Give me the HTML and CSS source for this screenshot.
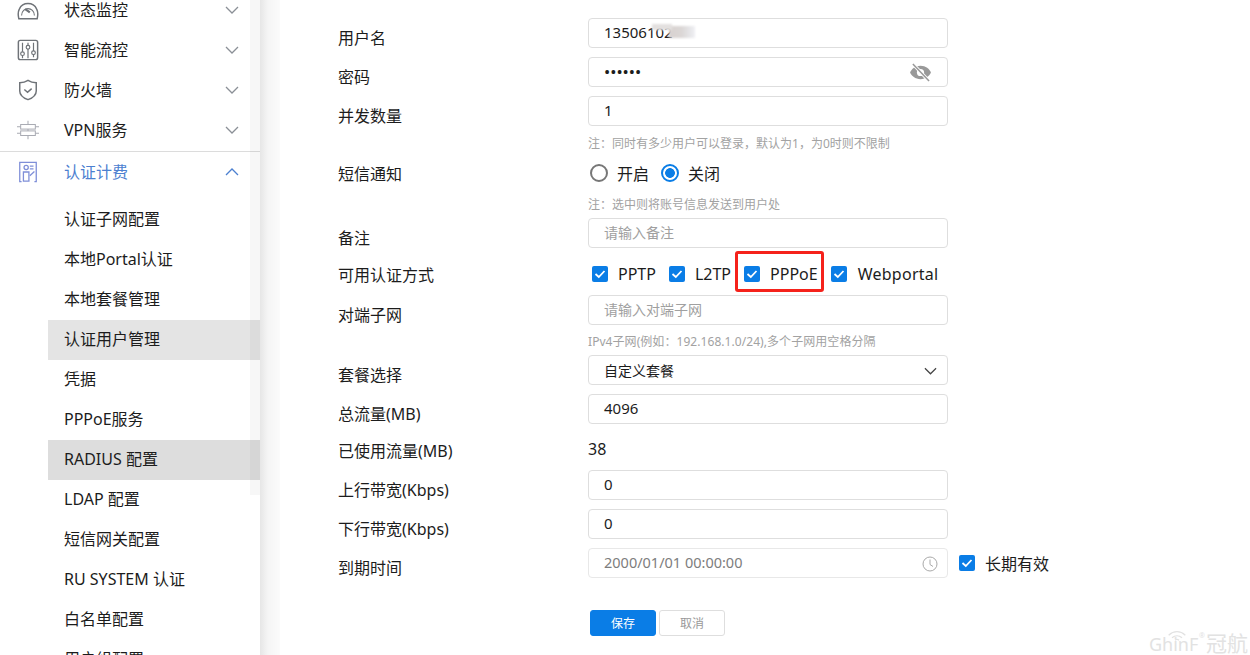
FILE: index.html
```html
<!DOCTYPE html>
<html lang="zh-CN">
<head>
<meta charset="utf-8">
<title>认证用户管理</title>
<link rel="stylesheet" href="styles.css">
</head>
<body>
<div class="app">
  <aside class="sidebar">
    <nav class="menu">
      <div class="menu-item">
        <svg class="menu-icon" viewBox="0 0 24 24" fill="none" stroke="#6f7378" stroke-width="1.6"><path d="M2 21.500 C1 17.500 1 14 2.500 11 A10.500 10.500 0 0 1 21.500 11 C23 14 23 17.500 22 21.500 Z"/><path d="M5 18 C5 8 19 8 19 18" stroke-width="1.200"/><path d="M9 11 l5 3.500" stroke-width="2.400"/></svg>
        <span class="menu-text">状态监控</span>
        <svg class="chev" viewBox="0 0 14 8"><path d="M1 1 L7 7 L13 1"/></svg>
      </div>
      <div class="menu-item">
        <svg class="menu-icon" viewBox="0 0 24 24" fill="none" stroke="#6f7378" stroke-width="1.3"><rect x="1.500" y="1.500" width="21" height="21" rx="2" stroke-width="1.600"/><path d="M6 4v10M6 18v3M12 4v3M12 11v10M18 4v9M18 17v3"/><circle cx="6" cy="16" r="2"/><circle cx="12" cy="9" r="2"/><circle cx="18" cy="15" r="2"/></svg>
        <span class="menu-text">智能流控</span>
        <svg class="chev" viewBox="0 0 14 8"><path d="M1 1 L7 7 L13 1"/></svg>
      </div>
      <div class="menu-item">
        <svg class="menu-icon" viewBox="0 0 24 24" fill="none" stroke="#6f7378" stroke-width="1.6"><path d="M12 1.500 C15 3.500 18 4 21 4 V13 C21 18 16 21 12 22.500 C8 21 3 18 3 13 V4 C6 4 9 3.500 12 1.500 Z"/><path d="M8 11.500 L11.500 14.500 L16 10.500"/></svg>
        <span class="menu-text">防火墙</span>
        <svg class="chev" viewBox="0 0 14 8"><path d="M1 1 L7 7 L13 1"/></svg>
      </div>
      <div class="menu-item">
        <svg class="menu-icon" viewBox="0 0 24 24" fill="none" stroke="#a9abb3" stroke-width="1.100"><rect x="4" y="6" width="16" height="5"/><rect x="4" y="13" width="16" height="5"/><path d="M0 8.500h4M20 8.500h4M0 15.500h4M20 15.500h4M12 2v4M12 18v4M12 11v2"/></svg>
        <span class="menu-text">VPN服务</span>
        <svg class="chev" viewBox="0 0 14 8"><path d="M1 1 L7 7 L13 1"/></svg>
      </div>
      <div class="menu-item menu-open">
        <svg class="menu-icon" viewBox="0 0 24 24" fill="none" stroke="#7f8fd8" stroke-width="1.400"><path d="M5 22.500 H3 V1.500 H21 V22.500 H19"/><circle cx="10" cy="7" r="2.300"/><path d="M7 22 V12 H13 V22 Z"/><path d="M14 5.500h4M14 8.500h4M14 16 L19 11.500"/></svg>
        <span class="menu-text">认证计费</span>
        <svg class="chev" viewBox="0 0 14 8"><path d="M1 7 L7 1 L13 7"/></svg>
      </div>
      <div class="submenu">
        <div class="sub-item">认证子网配置</div>
        <div class="sub-item">本地Portal认证</div>
        <div class="sub-item">本地套餐管理</div>
        <div class="sub-item sub-active">认证用户管理</div>
        <div class="sub-item">凭据</div>
        <div class="sub-item">PPPoE服务</div>
        <div class="sub-item sub-hover">RADIUS 配置</div>
        <div class="sub-item">LDAP 配置</div>
        <div class="sub-item">短信网关配置</div>
        <div class="sub-item">RU SYSTEM 认证</div>
        <div class="sub-item">白名单配置</div>
        <div class="sub-item">用户组配置</div>
      </div>
    </nav>
    <div class="scroll-strip"></div>
  </aside>
  <div class="shade"></div>
  <main class="main">
    <form class="form">
      <div class="row row-tight">
        <label class="label">用户名</label>
        <div class="control">
          <div class="input masked-wrap">13506102
            <span class="mask"></span>
          </div>
        </div>
      </div>
      <div class="row row-tight">
        <label class="label">密码</label>
        <div class="control">
          <div class="input input-pw"><span class="dots">••••••</span>
            <svg class="eye" viewBox="0 0 24 20"><path fill="#999" d="M12 3 C6.500 3 2.500 6.500 1 10 C2.500 13.500 6.500 17 12 17 C17.500 17 21.500 13.500 23 10 C21.500 6.500 17.500 3 12 3 Z"/><circle cx="12" cy="10" r="3.800" fill="#fff"/><path d="M4 1 L21 19" stroke="#fff" stroke-width="3.500"/><path d="M4 1 L21 19" stroke="#999" stroke-width="1.600"/></svg>
          </div>
        </div>
      </div>
      <div class="row row-note-a">
        <label class="label">并发数量</label>
        <div class="control">
          <div class="input">1</div>
          <p class="note">注<span class="colon">：</span>同时有多少用户可以登录，默认为1，为0时则不限制</p>
        </div>
      </div>
      <div class="row row-radio">
        <label class="label label-mid">短信通知</label>
        <div class="control">
          <div class="radios">
            <span class="radio"></span><span class="opt">开启</span>
            <span class="radio radio-on"></span><span class="opt">关闭</span>
          </div>
          <p class="note note-radio">注<span class="colon">：</span>选中则将账号信息发送到用户处</p>
        </div>
      </div>
      <div class="row row-remark">
        <label class="label">备注</label>
        <div class="control"><div class="input placeholder">请输入备注</div></div>
      </div>
      <div class="row row-checks">
        <label class="label label-mid">可用认证方式</label>
        <div class="control checks">
          <span class="check"><svg viewBox="0 0 16 16"><path d="M3.500 8 L6.800 11 L12.500 5"/></svg></span><span class="check-text">PPTP</span>
          <span class="check"><svg viewBox="0 0 16 16"><path d="M3.500 8 L6.800 11 L12.500 5"/></svg></span><span class="check-text">L2TP</span>
          <span class="check"><svg viewBox="0 0 16 16"><path d="M3.500 8 L6.800 11 L12.500 5"/></svg></span><span class="check-text">PPPoE</span>
          <span class="check"><svg viewBox="0 0 16 16"><path d="M3.500 8 L6.800 11 L12.500 5"/></svg></span><span class="check-text check-wide">Webportal</span>
          <span class="red-box"></span>
        </div>
      </div>
      <div class="row row-peer">
        <label class="label">对端子网</label>
        <div class="control">
          <div class="input placeholder">请输入对端子网</div>
          <p class="note note-peer">IPv4子网(例如<span class="colon">：</span>192.168.1.0/24),多个子网用空格分隔</p>
        </div>
      </div>
      <div class="row row-tight">
        <label class="label">套餐选择</label>
        <div class="control">
          <div class="input input-select">自定义套餐
            <svg class="select-chev" viewBox="0 0 14 8"><path d="M1 1 L7 7 L13 1"/></svg>
          </div>
        </div>
      </div>
      <div class="row row-total">
        <label class="label">总流量(MB)</label>
        <div class="control"><div class="input">4096</div></div>
      </div>
      <div class="row row-used">
        <label class="label label-used">已使用流量(MB)</label>
        <div class="control used">38</div>
      </div>
      <div class="row row-tight">
        <label class="label">上行带宽(Kbps)</label>
        <div class="control"><div class="input">0</div></div>
      </div>
      <div class="row row-tight">
        <label class="label">下行带宽(Kbps)</label>
        <div class="control"><div class="input">0</div></div>
      </div>
      <div class="row row-date">
        <label class="label">到期时间</label>
        <div class="control">
          <div class="input input-date">2000/01/01 00:00:00
            <svg class="clock" viewBox="0 0 16 16"><circle cx="8" cy="8" r="7"/><path d="M8 3.500 V8.500 L11 10.500"/></svg>
          </div>
        </div>
        <div class="long-term">
          <span class="check"><svg viewBox="0 0 16 16"><path d="M3.500 8 L6.800 11 L12.500 5"/></svg></span><span class="long-text">长期有效</span>
        </div>
      </div>
      <div class="actions">
        <button type="button" class="btn btn-primary">保存</button>
        <button type="button" class="btn btn-default">取消</button>
      </div>
    </form>
  </main>
</div>
<div class="watermark">
  <svg class="wm-wifi" viewBox="0 0 24 14" fill="none" stroke="#e2e2e2" stroke-width="1.500"><path d="M2 6 C8 0.500 16 0.500 22 6"/><path d="M6 9 C9.500 6 14.500 6 18 9"/><path d="M9.500 12 C11 10.800 13 10.800 14.500 12"/></svg>
  <span class="wm-en">GhinF</span><span class="wm-reg">®</span><span class="wm-cn">冠航</span>
</div>
</body>
</html>
```

FILE: styles.css
```css
* { box-sizing: border-box; }
html, body {
  margin: 0;
  height: 100%;
  overflow: hidden;
  background: #fff;
}
body {
  font-family: "Noto Sans", "Noto Sans CJK SC", sans-serif;
  color: #1c1c1c;
  position: relative;
}
.app { display: flex; height: 655px; overflow: hidden; }

/* Sidebar */
.sidebar {
  width: 260px;
  flex: none;
  position: relative;
  background: #fff;
  overflow: hidden;
}
.menu { margin-top: -10px; position: relative; z-index: 1; }
.menu-item {
  height: 40px;
  display: flex;
  align-items: center;
  font-size: 16px;
  color: #1c1c1c;
}
.menu-open {
  height: 40px;
  margin-top: 1px;
  border-top: 1px solid #dcdcdc;
  color: #4c80d0;
}
.menu-icon { width: 22px; height: 22px; margin-left: 17px; flex: none; }
.menu-text { margin-left: 25px; flex: 1; white-space: nowrap; padding-bottom: 2px; }
.chev {
  width: 14px;
  height: 8px;
  margin-right: 21px;
  fill: none;
  stroke: #8a8f96;
  stroke-width: 1.300;
  flex: none;
}
.menu-open .chev { stroke: #4c80d0; }
.submenu { padding: 9px 0 0 48px; }
.sub-item {
  height: 40px;
  line-height: 38px;
  padding-left: 16px;
  font-size: 16px;
  white-space: nowrap;
}
.sub-active { background: #e4e4e4; }
.sub-hover { background: #dddddd; }
.scroll-strip {
  position: absolute;
  top: 0;
  right: 0;
  width: 10px;
  height: 495px;
  background: rgba(0, 0, 0, 0.03);
  z-index: 2;
}
.shade {
  width: 20px;
  flex: none;
  background: linear-gradient(to right, #e6e6e6, #f5f5f5 40%, #fbfbfb);
}

/* Form */
.main { flex: 1; padding: 18px 0 0 58px; min-width: 0; }
.row { display: flex; align-items: flex-start; }
.label {
  width: 250px;
  flex: none;
  font-size: 16px;
  line-height: 24px;
  padding-top: 8px;
  white-space: nowrap;
}
.label-mid { padding-top: 4px; }
.label-used { padding-top: 7px; }
.control { width: 360px; flex: none; position: relative; }
.row-tight { height: 39px; }
.row-note-a { height: 62px; }
.row-radio { height: 60px; }
.row-remark { height: 41px; }
.row-checks { height: 36px; }
.row-peer { height: 60px; }
.row-total { height: 38px; }
.row-used { height: 38px; }
.row-date { height: 62px; }

.input {
  height: 30px;
  line-height: 27px;
  border: 1px solid #dedede;
  border-radius: 4px;
  padding: 0 15px;
  font-size: 15px;
  color: #1c1c1c;
  background: #fff;
  position: relative;
  white-space: nowrap;
}
.placeholder { font-size: 14px; color: #a0a0a0; }
.input-select { font-size: 14px; line-height: 29px; }
.input-date { color: #7d7d7d; font-size: 14.500px; border-color: #e8e8e8; }
.dots { font-size: 16.500px; color: #1c1c1c; }
.mask {
  position: absolute;
  left: 80px;
  top: 7px;
  width: 26px;
  height: 12px;
  background: linear-gradient(to right, #d8d2d0 0, #dbd7d6 50%, #e6e6e8 80%, #f0f0f4 100%);
  filter: blur(1.200px);
}
.mask::before {
  content: "";
  position: absolute;
  left: -17px;
  top: -2px;
  width: 20px;
  height: 6px;
  background: #e3e0df;
}
.eye { position: absolute; right: 15px; top: 5px; width: 23px; height: 19px; }
.select-chev {
  position: absolute;
  right: 10px;
  top: 11px;
  width: 13px;
  height: 8px;
  fill: none;
  stroke: #444;
  stroke-width: 1.300;
}
.clock {
  position: absolute;
  right: 9px;
  top: 7px;
  width: 16px;
  height: 16px;
  fill: none;
  stroke: #a9a9a9;
  stroke-width: 1;
}
.note {
  margin: 9px 0 0;
  font-size: 12px;
  line-height: 16px;
  color: #a2a2a2;
  white-space: nowrap;
}
.colon { font-family: "Noto Sans CJK TC", sans-serif; }
.note-radio { margin-top: 8px; }
.note-peer { margin-top: 8px; letter-spacing: 0.060px; }

.radios { display: flex; align-items: center; height: 30px; padding-left: 2px; }
.radio {
  width: 18px;
  height: 18px;
  border: 2px solid #777;
  border-radius: 50%;
  flex: none;
  background: #fff;
}
.radio-on {
  border-color: #0a7de6;
  background: radial-gradient(circle, #0a7de6 0 4.500px, #fff 5.200px);
}
.opt { font-size: 16px; margin: 0 12px 0 9px; padding-bottom: 1px; white-space: nowrap; }

.checks { display: flex; align-items: center; height: 30px; padding-left: 4px; }
.check {
  width: 16px;
  height: 16px;
  background: #0a7de6;
  border-radius: 2px;
  flex: none;
  display: block;
}
.check svg { width: 16px; height: 16px; display: block; fill: none; stroke: #fff; stroke-width: 1.800; }
.check-text { font-size: 16px; margin: 0 13px 0 10px; white-space: nowrap; }
.check-wide { letter-spacing: 0.250px; margin-left: 11px; }
.red-box {
  position: absolute;
  left: 147px;
  top: -8px;
  width: 89px;
  height: 41px;
  border: 3px solid #f5221b;
  border-radius: 3px;
}
.used { font-size: 16px; line-height: 24px; padding-top: 5px; }
.long-term { display: flex; align-items: center; height: 30px; margin-left: 11px; }
.long-text { font-size: 16px; margin-left: 10px; white-space: nowrap; }

.actions { display: flex; gap: 3px; padding-left: 252px; }
.btn {
  width: 66px;
  height: 26px;
  border-radius: 3px;
  font-family: inherit;
  font-size: 12px;
  padding: 0;
  border: 1px solid #dedede;
  background: #fff;
  color: #999;
}
.btn-primary { background: #0a7de6; border-color: #0a7de6; color: #fff; }

/* Watermark */
.watermark {
  position: absolute;
  right: 0;
  bottom: 0;
  width: 101px;
  height: 30px;
  color: #e2e2e2;
  pointer-events: none;
}
.wm-wifi { position: absolute; left: 18px; top: 5px; width: 20px; height: 12px; }
.wm-en { position: absolute; left: 0; top: 7px; font-size: 18px; line-height: 24px; }
.wm-reg { position: absolute; left: 50px; top: 6px; font-size: 7px; line-height: 10px; }
.wm-cn { position: absolute; left: 57px; top: 6px; font-size: 21px; line-height: 24px; }
```
